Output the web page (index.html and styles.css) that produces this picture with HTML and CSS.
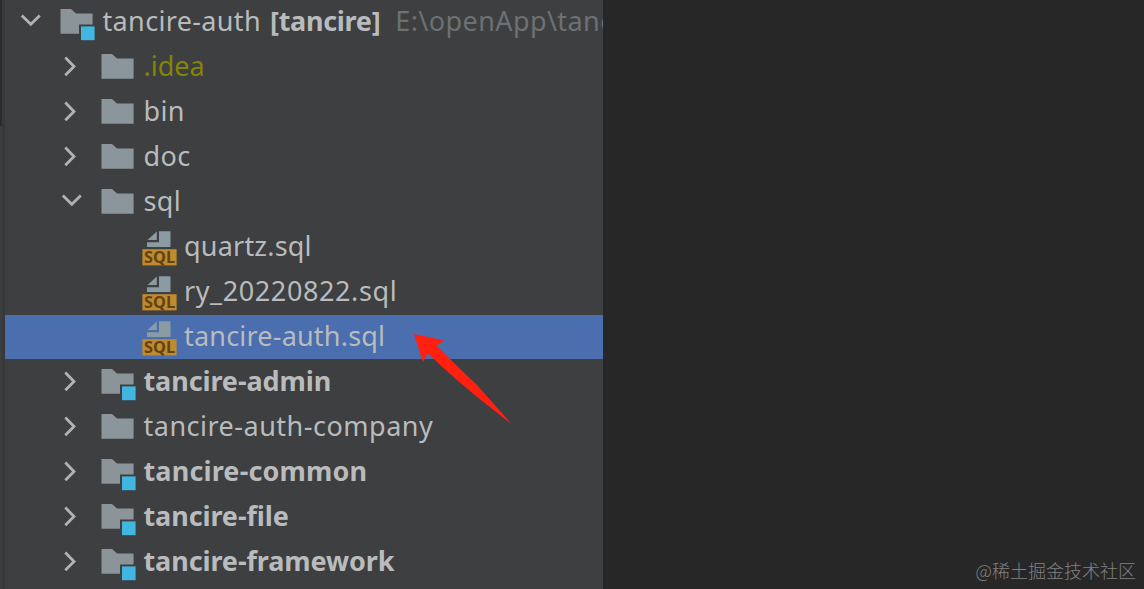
FILE: index.html
```html
<!DOCTYPE html>
<html lang="en">
<head>
    <meta charset="utf-8" />
    <title>tancire-auth</title>
    <link rel="stylesheet" href="styles.css">
</head>
<body>
    <svg class="defs" width="0" height="0">
        <symbol id="down" viewBox="0 0 24 45"><path d="M1.8 15.5 L10.8 24.3 L19.8 15.5" /></symbol>
        <symbol id="right" viewBox="0 0 24 45"><path d="M4.3 12.5 L13 21.4 L4.3 30.3" /></symbol>
        <symbol id="folder" viewBox="0 0 40 45">
            <path fill="#8a969c" d="M0.5 9 H11 L16 13.4 H32.6 V33.8 H0.5 Z" />
        </symbol>
        <symbol id="module" viewBox="0 0 40 45">
            <path fill="#8a9499" d="M0.5 9 H11 L16 13.4 H32.6 V24.5 H19 V33.8 H0.5 Z" />
            <rect fill="#40b6e0" x="21" y="26.4" width="13.6" height="13.8" />
        </symbol>
        <symbol id="sqlfile" viewBox="0 0 40 45">
            <path fill="#8b9ba3" d="M17 6.3 H28.5 V22 H5 V17.2 H17 Z" />
            <path fill="#8b9ba3" d="M14.8 6.5 V15 H5.5 Z" />
            <rect fill="#c08a2d" x="0.4" y="24.2" width="34.2" height="16.2" />
            <text class="badge" x="17.6" y="37.8" text-anchor="middle" textLength="31" lengthAdjust="spacingAndGlyphs">SQL</text>
        </symbol>
    </svg>

    <div class="window">
        <div class="gutter"></div>
        <div class="tree">
            <div class="row root"><svg class="arrow"><use href="#down" /></svg><svg class="icon"><use href="#module" /></svg><span class="name">tancire-auth</span><span class="name bold project">[tancire]</span><span class="name path">E:\openApp\tanc</span></div>
            <div class="row"><svg class="arrow"><use href="#right" /></svg><svg class="icon"><use href="#folder" /></svg><span class="name ignored">.idea</span></div>
            <div class="row"><svg class="arrow"><use href="#right" /></svg><svg class="icon"><use href="#folder" /></svg><span class="name">bin</span></div>
            <div class="row"><svg class="arrow"><use href="#right" /></svg><svg class="icon"><use href="#folder" /></svg><span class="name">doc</span></div>
            <div class="row"><svg class="arrow"><use href="#down" /></svg><svg class="icon"><use href="#folder" /></svg><span class="name">sql</span></div>
            <div class="row file"><svg class="icon"><use href="#sqlfile" /></svg><span class="name">quartz.sql</span></div>
            <div class="row file"><svg class="icon"><use href="#sqlfile" /></svg><span class="name digits">ry_20220822.sql</span></div>
            <div class="row file selected"><svg class="icon"><use href="#sqlfile" /></svg><span class="name">tancire-auth.sql</span></div>
            <div class="row"><svg class="arrow"><use href="#right" /></svg><svg class="icon"><use href="#module" /></svg><span class="name bold">tancire-admin</span></div>
            <div class="row"><svg class="arrow"><use href="#right" /></svg><svg class="icon"><use href="#folder" /></svg><span class="name long">tancire-auth-company</span></div>
            <div class="row"><svg class="arrow"><use href="#right" /></svg><svg class="icon"><use href="#module" /></svg><span class="name bold long">tancire-common</span></div>
            <div class="row"><svg class="arrow"><use href="#right" /></svg><svg class="icon"><use href="#module" /></svg><span class="name bold">tancire-file</span></div>
            <div class="row"><svg class="arrow"><use href="#right" /></svg><svg class="icon"><use href="#module" /></svg><span class="name bold">tancire-framework</span></div>
        </div>
        <div class="editor">
            <span class="watermark">@稀土掘金技术社区</span>
        </div>
        <svg class="pointer" width="100" height="94" viewBox="0 0 100 94">
            <path fill="#ff2010" d="M1 1 L31.5 7.5 L23.5 12.5 C38 27 51 40 64 52 L99 91.5 C82 78 66 66 53.5 55 C39 43 27 32 15 20.5 L10 29 Z" />
        </svg>
    </div>
</body>
</html>
```

FILE: styles.css
```css
body {
    margin: 0;
    background: #272727;
}

.defs {
    display: block;
}

.window {
    position: relative;
    display: flex;
    height: 589px;
    overflow: hidden;
}

.gutter {
    box-sizing: border-box;
    width: 5px;
    background: linear-gradient(#2a2b2c 126px, #3c3e3f 126px) no-repeat 0 0 / 2px 100%, #36383a;
}

.tree {
    width: 598px;
    overflow: hidden;
    background: #3d3f41;
}

.row {
    display: flex;
    height: 45px;
    padding-left: 56px;
    white-space: nowrap;
}

.root {
    padding-left: 15px;
}

.file {
    padding-left: 137px;
}

.selected {
    height: 44px;
    margin-bottom: 1px;
    background: #4b6eaf;
}

.arrow {
    flex: none;
    width: 24px;
    height: 45px;
    margin-right: 16px;
    fill: none;
    stroke: #b0b2b3;
    stroke-width: 2.8;
}

.icon {
    flex: none;
    width: 40px;
    height: 45px;
    margin-right: 2.5px;
}

.name {
    font-family: "Noto Sans", "Open Sans", sans-serif;
    font-size: 27px;
    line-height: 41px;
    letter-spacing: 0.35px;
    color: #b9bbbc;
}

.file .name {
    margin-left: -0.5px;
    letter-spacing: 0.2px;
}

.file .digits {
    letter-spacing: 0.6px;
}

.long {
    letter-spacing: 0.5px;
}

.bold {
    font-weight: bold;
    letter-spacing: -0.1px;
}

.bold.long {
    letter-spacing: 0.15px;
}

.project {
    margin-left: 9px;
    letter-spacing: -0.3px;
}

.path {
    margin-left: 15px;
    letter-spacing: 0.4px;
    color: #6e7072;
}

.ignored {
    letter-spacing: 0;
    color: #848504;
}

.badge {
    font-family: "Noto Sans", sans-serif;
    font-size: 15.5px;
    font-weight: bold;
    fill: #624316;
}

.editor {
    display: flex;
    flex: 1;
    align-items: flex-end;
    justify-content: flex-end;
    background: #272727;
}

.watermark {
    padding: 0 8px 5px 0;
    font-family: "Noto Sans CJK SC", sans-serif;
    font-size: 18px;
    font-weight: 300;
    line-height: 28px;
    color: #818181;
}

/* red arrow over the selected file */
.pointer {
    position: absolute;
    left: 413px;
    top: 333px;
}
```
